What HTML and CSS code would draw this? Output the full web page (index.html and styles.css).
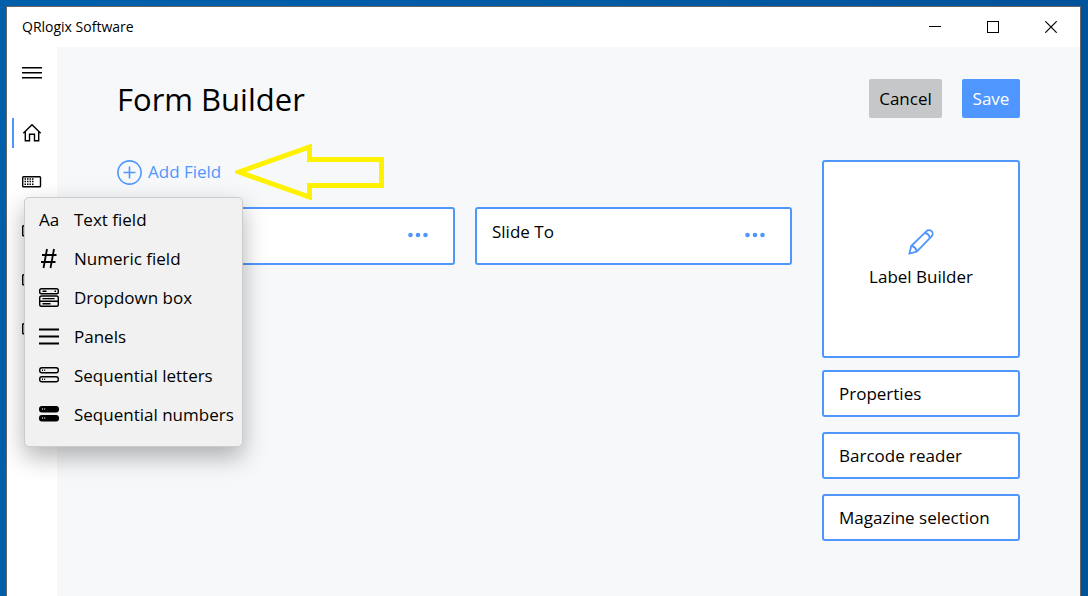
FILE: index.html
```html
<!DOCTYPE html>
<html lang="en">
<head>
  <meta charset="UTF-8">
  <title>QRlogix Software</title>
  <link rel="stylesheet" href="styles.css">
</head>
<body>

  <div class="window">
    <header class="titlebar">
      <span class="app-name">QRlogix Software</span>
      <div class="window-controls">
        <button type="button" aria-label="Minimize">
          <svg width="12" height="12" viewBox="0 0 12 12"><path d="M0 5.5h12"/></svg>
        </button>
        <button type="button" aria-label="Maximize">
          <svg width="12" height="12" viewBox="0 0 12 12"><rect x="0.5" y="0.5" width="11" height="11"/></svg>
        </button>
        <button type="button" aria-label="Close">
          <svg width="12" height="12" viewBox="0 0 12 12"><path class="cross" d="M0.3 0.3l11.4 11.4M11.7 0.3L0.3 11.7"/></svg>
        </button>
      </div>
    </header>

    <div class="layout">
      <nav class="sidebar">
        <button type="button" class="menu-toggle" aria-label="Menu">
          <svg width="20" height="12" viewBox="0 0 20 12"><path d="M0 0.8h20M0 5.8h20M0 10.8h20"/></svg>
        </button>
        <a href="#" class="nav-item active" aria-label="Home">
          <svg width="20" height="20" viewBox="0 0 20 20"><path d="M1.3 10.3L10 1.7l8.7 8.6M3.3 8.6v9.2h4.2v-6.6h5v6.6h4.2V8.6"/></svg>
        </a>
        <a href="#" class="nav-item" aria-label="Labels">
          <svg width="20" height="12" viewBox="0 0 20 12"><rect x="0.7" y="0.7" width="17.8" height="10" rx="0.8"/><path class="dots" d="M2.5 3h9M2.5 5.5h9M2.5 8.3h2M5 8.3h4M10 8.3h2"/></svg>
        </a>
        <a href="#" class="nav-item" aria-label="Forms">
          <svg width="20" height="12" viewBox="0 0 20 12"><rect x="0.7" y="0.7" width="17.8" height="10" rx="0.8"/></svg>
        </a>
        <a href="#" class="nav-item" aria-label="Printers">
          <svg width="20" height="12" viewBox="0 0 20 12"><rect x="0.7" y="0.7" width="17.8" height="10" rx="0.8"/></svg>
        </a>
        <a href="#" class="nav-item" aria-label="Settings">
          <svg width="20" height="12" viewBox="0 0 20 12"><rect x="0.7" y="0.7" width="17.8" height="10" rx="0.8"/></svg>
        </a>
      </nav>

      <main class="main">
        <div class="page-header">
          <h1>Form Builder</h1>
          <div class="actions">
            <button type="button" class="btn btn-cancel">Cancel</button>
            <button type="button" class="btn btn-save">Save</button>
          </div>
        </div>

        <div class="content">
          <section class="fields">
            <div class="toolbar">
              <button type="button" class="add-field">
                <svg width="25" height="25" viewBox="0 0 25 25"><circle cx="12.5" cy="12.5" r="11.6"/><path d="M12.5 6.5v12M6.5 12.5h12"/></svg>
                Add Field
              </button>
              <svg class="arrow" width="149" height="56" viewBox="0 0 149 56"><path d="M4 28L74.5 3V15.5H146.5V41.5H74.5V53Z"/></svg>

              <div class="dropdown">
                <button type="button" class="dropdown-item">
                  <span class="glyph">Aa</span>Text field
                </button>
                <button type="button" class="dropdown-item">
                  <svg width="22" height="22" viewBox="0 0 22 22"><path class="thick" d="M9 1L5.5 20M16 1L12.5 20M4 7h14.5M3 14h14.5"/></svg>Numeric field
                </button>
                <button type="button" class="dropdown-item">
                  <svg width="22" height="22" viewBox="0 0 22 22"><rect x="1.7" y="1.7" width="18.6" height="5" rx="1.8"/><rect x="1.7" y="9" width="18.6" height="10.3" rx="1.8"/><path d="M1.7 14.2h18.6M4.5 4.2h4M16.5 4.2h1.5M4.5 11.6h12M4.5 16.7h8"/></svg>Dropdown box
                </button>
                <button type="button" class="dropdown-item">
                  <svg width="22" height="22" viewBox="0 0 22 22"><path class="bars" d="M1 3.5h20M1 10.5h20M1 17.5h20"/></svg>Panels
                </button>
                <button type="button" class="dropdown-item">
                  <svg width="22" height="22" viewBox="0 0 22 22"><rect x="1.7" y="2.7" width="18.6" height="5" rx="2.2"/><rect x="1.7" y="11.7" width="18.6" height="5" rx="2.2"/><path d="M4 5.2h1M6.2 5.2h1M4 14.2h1M6.2 14.2h1"/></svg>Sequential letters
                </button>
                <button type="button" class="dropdown-item">
                  <svg class="solid" width="22" height="22" viewBox="0 0 22 22"><rect x="1.7" y="2.7" width="18.6" height="5" rx="2.2"/><rect x="1.7" y="11.7" width="18.6" height="5" rx="2.2"/><path d="M4 5h1M6.2 5h1M4 14h1M6.2 14h1"/></svg>Sequential numbers
                </button>
              </div>
            </div>

            <div class="cards">
              <div class="card">
                <button type="button" class="more" aria-label="More">
                  <svg width="22" height="6" viewBox="0 0 22 6"><circle cx="3.5" cy="3" r="2.3"/><circle cx="11" cy="3" r="2.3"/><circle cx="18.5" cy="3" r="2.3"/></svg>
                </button>
              </div>
              <div class="card">
                <span>Slide To</span>
                <button type="button" class="more" aria-label="More">
                  <svg width="22" height="6" viewBox="0 0 22 6"><circle cx="3.5" cy="3" r="2.3"/><circle cx="11" cy="3" r="2.3"/><circle cx="18.5" cy="3" r="2.3"/></svg>
                </button>
              </div>
            </div>
          </section>

          <aside class="panel">
            <button type="button" class="label-builder">
              <svg width="26" height="26" viewBox="0 0 26 26"><path d="M1.5 24.5l1.7-7.5L18.5 2.2a3.6 3.6 0 0 1 5.1 5.1L8.7 22.7zM3.2 17c3 .3 5 2.5 5.5 5.7M16.7 4c2.8.3 4.6 2.1 5.1 5.1"/></svg>
              Label Builder
            </button>
            <button type="button" class="panel-item">Properties</button>
            <button type="button" class="panel-item">Barcode reader</button>
            <button type="button" class="panel-item">Magazine selection</button>
          </aside>
        </div>
      </main>
    </div>
  </div>

</body>
</html>
```

FILE: styles.css
```css
* {
  box-sizing: border-box;
}

body {
  margin: 0;
  padding: 6px 7px 0 6px;
  min-height: 100vh;
  display: flex;
  background: linear-gradient(90deg, #005fab, #005ba5 50%, #00529a);
  font-family: "Segoe UI", "Open Sans", "Noto Sans", sans-serif;
  font-size: 17px;
  line-height: 24px;
  color: #000;
}

button {
  padding: 0;
  border: none;
  background: none;
  font: inherit;
  color: inherit;
  cursor: pointer;
}

svg {
  display: block;
  flex: none;
  fill: none;
  stroke: #000;
}

.window {
  flex: 1;
  display: flex;
  flex-direction: column;
  background: #fff;
  border: 1px solid #666;
  border-bottom: none;
}

.titlebar {
  display: flex;
  justify-content: space-between;
  height: 40px;
  padding-left: 15px;
}

.app-name {
  font-size: 14px;
  line-height: 40px;
}

.window-controls {
  display: flex;
}

.window-controls button {
  display: flex;
  align-items: center;
  justify-content: center;
  width: 58px;
}

.window-controls .cross {
  stroke-width: 1.2;
}

.layout {
  flex: 1;
  display: flex;
}

.sidebar {
  width: 50px;
}

.menu-toggle {
  display: flex;
  align-items: center;
  width: 50px;
  height: 51px;
  margin-bottom: 10px;
  padding-left: 15px;
}

.menu-toggle svg {
  stroke-width: 1.4;
}

.nav-item {
  display: flex;
  align-items: center;
  height: 49px;
  padding-left: 15px;
}

.nav-item svg {
  stroke-width: 1.4;
}

.nav-item .dots {
  stroke-dasharray: 1.5 1;
}

.active {
  padding-left: 8px;
  margin-left: 5px;
}

.active::before {
  content: "";
  width: 2px;
  height: 30px;
  margin: 0 8px 0 -8px;
  background: #4f97ff;
}

.main {
  flex: 1;
  padding: 32px 60px;
  background: #f7f8fa;
}

.page-header {
  display: flex;
  justify-content: space-between;
  align-items: center;
  height: 39px;
}

h1 {
  margin: 0;
  font-size: 31px;
  line-height: 42px;
  font-weight: 400;
}

.actions {
  display: flex;
  gap: 20px;
}

.btn {
  height: 39px;
  border-radius: 2px;
}

.btn-cancel {
  width: 73px;
  background: #c6c7c9;
}

.btn-save {
  width: 58px;
  background: #4f97ff;
  color: #fff;
}

.content {
  display: grid;
  grid-template-columns: 1fr 198px;
  gap: 30px;
  margin-top: 26px;
}

.toolbar {
  position: relative;
  display: flex;
  align-items: center;
  gap: 14px;
}

.add-field {
  display: flex;
  align-items: center;
  gap: 6px;
  white-space: nowrap;
  color: #4f97ff;
}

.add-field svg {
  stroke: #4f97ff;
  stroke-width: 1.6;
}

.arrow {
  stroke: #fff200;
  stroke-width: 5;
}

.dropdown {
  position: absolute;
  z-index: 1;
  top: 53px;
  left: -93px;
  width: 219px;
  padding: 2px 0 12px;
  background: #f1f1f1;
  border: 1px solid #ccc;
  border-radius: 5px;
  box-shadow: 0 10px 24px rgba(0, 0, 0, 0.3);
}

.dropdown-item {
  display: flex;
  align-items: center;
  gap: 14px;
  width: 100%;
  height: 39px;
  padding-left: 13px;
  white-space: nowrap;
}

.dropdown-item svg {
  stroke-width: 1.4;
}

.dropdown-item .thick,
.dropdown-item .bars {
  stroke-width: 1.8;
}

.dropdown-item .solid rect {
  fill: #000;
}

.dropdown-item .solid path {
  stroke: #ccc;
}

.glyph {
  width: 22px;
}

.cards {
  display: grid;
  grid-template-columns: 1fr 1fr;
  gap: 20px;
  margin-top: 7px;
  padding-left: 21px;
}

.card {
  display: flex;
  justify-content: space-between;
  height: 58px;
  padding: 11px 24px 0 15px;
  background: #fff;
  border: 2px solid #4f97ff;
  border-radius: 3px;
}

.more {
  height: 30px;
  margin-left: auto;
}

.more svg {
  fill: #4f97ff;
  stroke: none;
}

.panel {
  display: flex;
  flex-direction: column;
  gap: 15px;
  padding-top: 16px;
}

.label-builder,
.panel-item {
  background: #fff;
  border: 2px solid #4f97ff;
  border-radius: 3px;
}

.label-builder {
  display: flex;
  flex-direction: column;
  align-items: center;
  justify-content: center;
  gap: 10px;
  height: 198px;
  margin-bottom: -3px;
}

.label-builder svg {
  stroke: #4f97ff;
  stroke-width: 1.8;
}

.panel-item {
  height: 47px;
  padding-left: 15px;
  text-align: left;
}
```
